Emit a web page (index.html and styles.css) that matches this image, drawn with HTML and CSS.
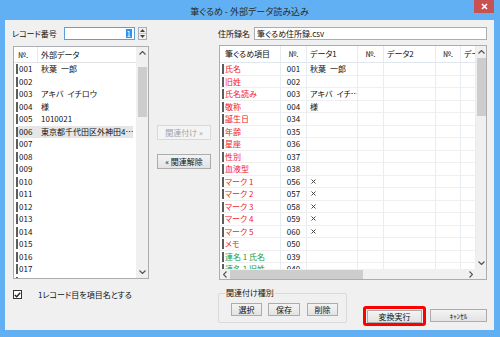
FILE: index.html
```html
<!DOCTYPE html>
<html lang="ja">
<head>
    <meta charset="UTF-8">
    <title>筆ぐるめ - 外部データ読み込み</title>
    <link rel="stylesheet" href="styles.css">
</head>
<body>
<div class="window">
    <div class="titlebar">
        <span></span>
        <span class="title">筆ぐるめ - 外部データ読み込み</span>
        <span class="close">
            <svg width="7" height="7" viewBox="0 0 7 7"><path d="M1 1 6 6M6 1 1 6" stroke="#fff" stroke-width="1.6"/></svg>
        </span>
    </div>

    <div class="dialog">
        <!-- top row -->
        <div class="top-left">
            <span class="label">レコード番号</span>
            <div class="num-input"><span class="sel">1</span></div>
            <div class="spin">
                <span><svg width="5" height="3" viewBox="0 0 5 3"><path d="M0 3 2.5 0 5 3Z" fill="#444"/></svg></span>
                <span><svg width="5" height="3" viewBox="0 0 5 3"><path d="M0 0 2.5 3 5 0Z" fill="#444"/></svg></span>
            </div>
        </div>
        <div></div>
        <div class="top-right">
            <span class="label">住所録名</span>
            <div class="text-input">筆ぐるめ住所録.csv</div>
        </div>

        <!-- external data list -->
        <div class="list-box">
            <div class="list-main">
                <div class="list-head"><span class="c-no">№.</span><span class="c-data">外部データ</span></div>
                <div class="list-row"><span class="c-no">001</span><span class="c-data">秋葉&ensp;一郎</span></div>
                <div class="list-row"><span class="c-no">002</span><span class="c-data"></span></div>
                <div class="list-row"><span class="c-no">003</span><span class="c-data">アキバ&ensp;イチロウ</span></div>
                <div class="list-row"><span class="c-no">004</span><span class="c-data">様</span></div>
                <div class="list-row"><span class="c-no">005</span><span class="c-data">1010021</span></div>
                <div class="list-row selected"><span class="c-no">006</span><span class="c-data">東京都千代田区外神田4…</span></div>
                <div class="list-row"><span class="c-no">007</span><span class="c-data"></span></div>
                <div class="list-row"><span class="c-no">008</span><span class="c-data"></span></div>
                <div class="list-row"><span class="c-no">009</span><span class="c-data"></span></div>
                <div class="list-row"><span class="c-no">010</span><span class="c-data"></span></div>
                <div class="list-row"><span class="c-no">011</span><span class="c-data"></span></div>
                <div class="list-row"><span class="c-no">012</span><span class="c-data"></span></div>
                <div class="list-row"><span class="c-no">013</span><span class="c-data"></span></div>
                <div class="list-row"><span class="c-no">014</span><span class="c-data"></span></div>
                <div class="list-row"><span class="c-no">015</span><span class="c-data"></span></div>
                <div class="list-row"><span class="c-no">016</span><span class="c-data"></span></div>
                <div class="list-row"><span class="c-no">017</span><span class="c-data"></span></div>
                <div class="list-row"><span class="c-no">018</span><span class="c-data"></span></div>
            </div>
            <div class="vscroll list-scroll">
                <span class="arrow"><svg width="7" height="4" viewBox="0 0 7 4"><path d="M.5 3.5 3.5.5 6.5 3.5" fill="none" stroke="#555" stroke-width="1.2"/></svg></span>
                <span class="thumb"></span>
                <span class="fill"></span>
                <span class="arrow"><svg width="7" height="4" viewBox="0 0 7 4"><path d="M.5.5 3.5 3.5 6.5.5" fill="none" stroke="#555" stroke-width="1.2"/></svg></span>
            </div>
        </div>

        <!-- link / unlink -->
        <div class="middle">
            <button class="btn link-btn" disabled>関連付け »</button>
            <button class="btn link-btn">« 関連解除</button>
        </div>

        <!-- fudegurume fields -->
        <div class="table-box">
            <div class="grid">
                <div class="g-head">
                    <span>筆ぐるめ項目</span><span class="no">№.</span><span>データ1</span><span class="no">№.</span><span>データ2</span><span class="no">№.</span><span>データ3</span>
                </div>
                <div class="g-row red"><span class="name">氏名</span><span class="no">001</span><span>秋葉&ensp;一郎</span><span></span><span></span><span></span><span></span></div>
                <div class="g-row red"><span class="name">旧姓</span><span class="no">002</span><span></span><span></span><span></span><span></span><span></span></div>
                <div class="g-row red"><span class="name">氏名読み</span><span class="no">003</span><span>アキバ&ensp;イチ…</span><span></span><span></span><span></span><span></span></div>
                <div class="g-row red"><span class="name">敬称</span><span class="no">004</span><span>様</span><span></span><span></span><span></span><span></span></div>
                <div class="g-row red"><span class="name">誕生日</span><span class="no">034</span><span></span><span></span><span></span><span></span><span></span></div>
                <div class="g-row red"><span class="name">年齢</span><span class="no">035</span><span></span><span></span><span></span><span></span><span></span></div>
                <div class="g-row red"><span class="name">星座</span><span class="no">036</span><span></span><span></span><span></span><span></span><span></span></div>
                <div class="g-row red"><span class="name">性別</span><span class="no">037</span><span></span><span></span><span></span><span></span><span></span></div>
                <div class="g-row red"><span class="name">血液型</span><span class="no">038</span><span></span><span></span><span></span><span></span><span></span></div>
                <div class="g-row red"><span class="name">マーク 1</span><span class="no">056</span><span class="mark"><svg width="5" height="5" viewBox="0 0 5 5"><path d="M.5.5 4.5 4.5M4.5.5 .5 4.5" stroke="#444"/></svg></span><span></span><span></span><span></span><span></span></div>
                <div class="g-row red"><span class="name">マーク 2</span><span class="no">057</span><span class="mark"><svg width="5" height="5" viewBox="0 0 5 5"><path d="M.5.5 4.5 4.5M4.5.5 .5 4.5" stroke="#444"/></svg></span><span></span><span></span><span></span><span></span></div>
                <div class="g-row red"><span class="name">マーク 3</span><span class="no">058</span><span class="mark"><svg width="5" height="5" viewBox="0 0 5 5"><path d="M.5.5 4.5 4.5M4.5.5 .5 4.5" stroke="#444"/></svg></span><span></span><span></span><span></span><span></span></div>
                <div class="g-row red"><span class="name">マーク 4</span><span class="no">059</span><span class="mark"><svg width="5" height="5" viewBox="0 0 5 5"><path d="M.5.5 4.5 4.5M4.5.5 .5 4.5" stroke="#444"/></svg></span><span></span><span></span><span></span><span></span></div>
                <div class="g-row red"><span class="name">マーク 5</span><span class="no">060</span><span class="mark"><svg width="5" height="5" viewBox="0 0 5 5"><path d="M.5.5 4.5 4.5M4.5.5 .5 4.5" stroke="#444"/></svg></span><span></span><span></span><span></span><span></span></div>
                <div class="g-row red"><span class="name">メモ</span><span class="no">050</span><span></span><span></span><span></span><span></span><span></span></div>
                <div class="g-row green"><span class="name">連名 1 氏名</span><span class="no">039</span><span></span><span></span><span></span><span></span><span></span></div>
                <div class="g-row green"><span class="name">連名 1 旧姓</span><span class="no">040</span><span></span><span></span><span></span><span></span><span></span></div>
            </div>
            <div class="vscroll">
                <span class="arrow"><svg width="7" height="4" viewBox="0 0 7 4"><path d="M.5 3.5 3.5.5 6.5 3.5" fill="none" stroke="#555" stroke-width="1.2"/></svg></span>
                <span class="thumb"></span>
                <span class="fill"></span>
                <span class="arrow"><svg width="7" height="4" viewBox="0 0 7 4"><path d="M.5.5 3.5 3.5 6.5.5" fill="none" stroke="#555" stroke-width="1.2"/></svg></span>
            </div>
            <div class="hscroll">
                <span class="arrow"><svg width="4" height="7" viewBox="0 0 4 7"><path d="M3.5.5 .5 3.5 3.5 6.5" fill="none" stroke="#555" stroke-width="1.2"/></svg></span>
                <span class="thumb"></span>
                <span class="fill"></span>
                <span class="arrow"><svg width="4" height="7" viewBox="0 0 4 7"><path d="M.5.5 3.5 3.5 .5 6.5" fill="none" stroke="#555" stroke-width="1.2"/></svg></span>
            </div>
            <div class="corner"></div>
        </div>

        <!-- bottom row -->
        <div class="bottom-left">
            <span class="checkbox">
                <svg width="7" height="6" viewBox="0 0 7 6"><path d="M.8 3 2.7 4.8 6.2.8" fill="none" stroke="#222" stroke-width="1.4"/></svg>
            </span>
            <span class="check-label">1レコード目を項目名とする</span>
        </div>
        <div></div>
        <div class="bottom-right">
            <fieldset class="group">
                <legend>関連付け種別</legend>
                <button class="btn g-btn">選択</button>
                <button class="btn g-btn wide">保存</button>
                <button class="btn g-btn del">削除</button>
            </fieldset>
            <div class="highlight">
                <button class="btn run-btn">変換実行</button>
            </div>
            <button class="btn cancel-btn">ｷｬﾝｾﾙ</button>
        </div>
    </div>
</div>
</body>
</html>
```

FILE: styles.css
```css
* {
    margin: 0;
    padding: 0;
    box-sizing: border-box;
}

body {
    width: 500px;
    height: 337px;
    overflow: hidden;
    font-family: "Noto Sans CJK JP", "Noto Sans", sans-serif;
    font-size: 8px;
    font-feature-settings: "palt";
    color: #111;
}

.window {
    width: 500px;
    height: 337px;
    background: #62b0f4;
    padding: 0 6px 7px 5px;
    display: flex;
    flex-direction: column;
}

.titlebar {
    height: 20px;
    flex: none;
    display: grid;
    grid-template-columns: 1fr auto 1fr;
    align-items: start;
}

.title {
    margin-top: 6px;
    line-height: 12px;
    font-size: 9px;
    color: #2a2a2a;
}

.close {
    justify-self: end;
    width: 20px;
    height: 13px;
    background: #c85151;
    display: flex;
    align-items: center;
    justify-content: center;
}

.dialog {
    flex: 1;
    background: #f0f0f0;
    padding: 7px 7px 0 8px;
    display: grid;
    grid-template-columns: 136px 70px 268px;
    grid-template-rows: 13px 240px 1fr;
}

/* top row */
.top-left,
.top-right {
    display: flex;
    align-items: center;
}

.top-left .label {
    width: 52px;
    margin-left: -1px;
}

.top-right .label {
    width: 36px;
    margin-left: -1px;
}

.num-input {
    width: 71px;
    height: 13px;
    background: #fff;
    border: 1px solid #5a9fe0;
    display: flex;
    justify-content: flex-end;
    align-items: center;
    padding-right: 2px;
}

.num-input .sel {
    background: #3390ee;
    color: #fff;
    line-height: 9px;
    padding: 0 1px;
}

.spin {
    width: 9px;
    height: 13px;
    margin-left: 3px;
    border: 1px solid #adadad;
    background: #f2f2f2;
    display: flex;
    flex-direction: column;
}

.spin span {
    flex: 1;
    display: flex;
    align-items: center;
    justify-content: center;
}

.spin span + span {
    border-top: 1px solid #c8c8c8;
}

.text-input {
    flex: 1;
    height: 13px;
    background: #fff;
    border: 1px solid #abadb3;
    padding-left: 2px;
    line-height: 11px;
}

/* left list */
.list-box {
    margin-top: 6px;
    height: 233px;
    background: #fff;
    border: 1px solid #abadb3;
    display: grid;
    grid-template-columns: 1fr 12px;
    overflow: hidden;
}

.list-main {
    overflow: hidden;
}

.list-head {
    height: 16px;
    display: grid;
    grid-template-columns: 23px 1fr;
    border-bottom: 1px solid #e3e3e3;
    line-height: 15px;
}

.list-head .c-no {
    padding-left: 4px;
}

.list-head .c-data {
    border-left: 1px solid #e8e8e8;
    padding-left: 3px;
}

.list-row {
    height: 12.5px;
    line-height: 12.5px;
    display: grid;
    grid-template-columns: 23px 1fr;
    white-space: nowrap;
}

.list-row .c-no {
    padding-left: 2px;
}

.list-row .c-no::before,
.g-row .name::before {
    content: "";
    display: inline-block;
    width: 2px;
    height: 10px;
    background: #5c5c5c;
    vertical-align: middle;
    margin: -1px 1px 0 0;
}

.list-row .c-data {
    padding-left: 4px;
    overflow: hidden;
}

.list-row.selected {
    background: linear-gradient(#e6e6e6, #e6e6e6) 4px 0 / calc(100% - 7px) 100% no-repeat;
}

/* scrollbars */
.vscroll {
    background: #f0f0f0;
    display: flex;
    flex-direction: column;
    align-items: center;
}

.vscroll .arrow {
    height: 12px;
    display: flex;
    align-items: center;
    justify-content: center;
}

.vscroll .thumb {
    width: 9px;
    height: 58px;
    background: #cdcdcd;
}

.list-scroll .thumb {
    margin-top: 8px;
    height: 50px;
}

.vscroll .fill,
.hscroll .fill {
    flex: 1;
}

.hscroll {
    background: #f0f0f0;
    display: flex;
    align-items: center;
}

.hscroll .arrow {
    width: 10px;
    height: 10px;
    display: flex;
    align-items: center;
    justify-content: center;
}

.hscroll .thumb {
    width: 133px;
    height: 9px;
    background: #cdcdcd;
}

.corner {
    background: #f0f0f0;
}

/* middle buttons */
.middle {
    display: flex;
    flex-direction: column;
    align-items: center;
    padding-top: 85px;
    gap: 14px;
}

.btn {
    font-family: inherit;
    font-size: 8px;
    font-feature-settings: "palt";
    color: #111;
    background: linear-gradient(#f3f3f3, #e3e3e3);
    border: 1px solid #acacac;
    display: flex;
    align-items: center;
    justify-content: center;
}

.link-btn {
    width: 54px;
    height: 15px;
}

.link-btn:disabled {
    background: #f4f4f4;
    border-color: #d9d9d9;
    color: #a3a3a3;
}

/* right table */
.table-box {
    margin-top: 5px;
    height: 235px;
    background: #fff;
    border: 1px solid #abadb3;
    display: grid;
    grid-template-columns: 1fr 10px;
    grid-template-rows: 1fr 10px;
    overflow: hidden;
}

.grid {
    overflow: hidden;
}

.g-head,
.g-row {
    display: grid;
    grid-template-columns: 61px 26px 51px 26px 52px 25px 15px;
    white-space: nowrap;
}

.g-head {
    height: 17px;
    line-height: 16px;
    border-bottom: 1px solid #dfe6ec;
}

.g-head span {
    padding-left: 3px;
    border-right: 1px solid #e6ebf0;
    overflow: hidden;
}

.g-head span:first-child {
    padding-left: 5px;
}

.g-row {
    height: 12.5px;
    line-height: 12px;
}

.g-row span {
    padding-left: 3px;
    border-right: 1px solid #e8edf2;
    border-bottom: 1px solid #efefef;
    overflow: hidden;
}

.g-row .mark {
    padding-left: 4px;
    display: flex;
    align-items: center;
}

.g-head .no,
.g-row .no {
    padding-left: 0;
    text-align: center;
}

.g-row .name {
    padding-left: 2px;
}

.g-row.red .name {
    color: #f0222a;
}

.g-row.green .name {
    color: #249b3a;
}

/* bottom row */
.bottom-left {
    padding-top: 10px;
    display: flex;
    align-items: flex-start;
}

.checkbox {
    width: 9px;
    height: 9px;
    background: #fff;
    border: 1px solid #333;
    display: flex;
    align-items: center;
    justify-content: center;
}

.check-label {
    margin-left: 16px;
    line-height: 9px;
}

.bottom-right {
    margin-left: -1px;
    display: flex;
    align-items: flex-start;
}

.group {
    margin-top: 8px;
    width: 129px;
    border: 1px solid #d9d9d9;
    border-radius: 2px;
    padding: 5px 6px 6px;
    display: flex;
}

.group legend {
    padding: 0 1px;
    line-height: 10px;
}

.g-btn {
    width: 31px;
    height: 13px;
    margin-left: 6px;
}

.g-btn.wide {
    width: 32px;
}

.g-btn.del {
    margin-left: 7px;
}

.highlight {
    margin-left: 16px;
    margin-top: 26px;
    width: 63px;
    height: 20px;
    border: 3px solid #ff0000;
    border-radius: 3px;
    display: flex;
    align-items: center;
    justify-content: center;
}

.run-btn {
    width: 55px;
    height: 13px;
}

.cancel-btn {
    margin-left: 4px;
    margin-top: 29px;
    width: 57px;
    height: 13px;
    font-size: 7px;
}
```
